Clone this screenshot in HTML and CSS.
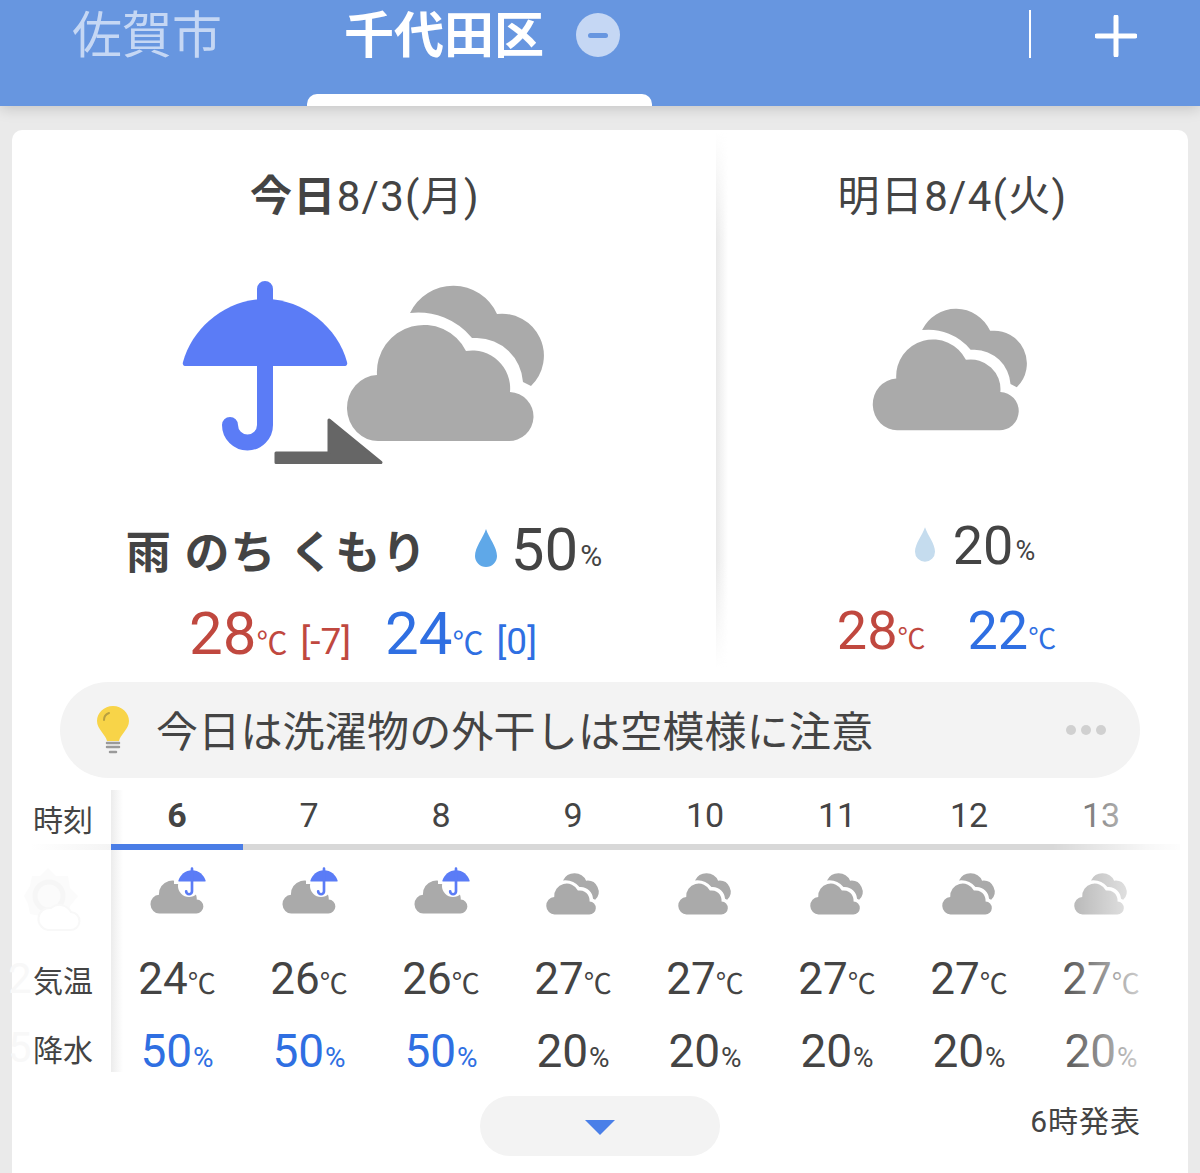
FILE: index.html
```html
<!DOCTYPE html>
<html lang="ja">
<head>
    <meta charset="utf-8">
    <title>天気予報</title>
    <link rel="stylesheet" href="styles.css">
</head>
<body>
    <svg class="defs" width="0" height="0">
        <defs>
            <symbol id="cloud-front" viewBox="346 323 189 120">
                <path fill="#aaaaaa" d="M380 441H508A24 24 0 0 0 510 392A38 38 0 0 0 466 351A47 47 0 0 0 377 375A31 33 0 0 0 379 441Z"/>
            </symbol>
            <symbol id="clouds" viewBox="346 285 207 158">
                <path fill="#aaaaaa" d="M410 313A48 48 0 0 1 497 314A42 42 0 0 1 531 386L523 382A47 47 0 0 0 477 338L472 338A70 70 0 0 0 410 313Z"/>
                <path fill="#aaaaaa" d="M380 441H508A24 24 0 0 0 510 392A38 38 0 0 0 466 351A47 47 0 0 0 377 375A31 33 0 0 0 379 441Z"/>
            </symbol>
            <symbol id="umbrella" viewBox="181 279 168 174">
                <path fill="#5b7cf6" d="M183 362C192 328 226 299 265 299C304 299 338 328 347 362Q348 366 344 366H186Q182 366 183 362Z"/>
                <path fill="none" stroke="#5b7cf6" stroke-width="16" stroke-linecap="round" d="M265 289V425A17.5 17.5 0 0 1 230 425"/>
            </symbol>
            <symbol id="rain-cloud" viewBox="0 0 60 50">
                <use href="#cloud-front" x="0" y="14" width="54" height="34"/>
                <circle cx="39" cy="20" r="11" fill="#fff"/>
                <path fill="#fff" d="M24 14C26 4 36 -2 42 -2C48 -2 56 6 58 14V18H24Z"/>
                <use href="#umbrella" x="28" y="1" width="28" height="29"/>
            </symbol>
            <symbol id="drop" viewBox="0 0 22 38">
                <path d="M11 0C14 9 22 18 22 27A11 11 0 0 1 0 27C0 18 8 9 11 0Z"/>
            </symbol>
        </defs>
    </svg>

    <header class="topbar">
        <div class="tab tab-other">佐賀市</div>
        <div class="tab tab-active">
            <span>千代田区</span>
            <span class="tab-remove"><span class="tab-remove-bar"></span></span>
        </div>
        <div class="topbar-actions">
            <span class="topbar-divider"></span>
            <svg class="topbar-plus" width="42" height="42" viewBox="0 0 42 42"><path d="M21 2V40M2 21H40" stroke="#fff" stroke-width="5" stroke-linecap="round"/></svg>
        </div>
    </header>

    <main class="card">
        <section class="days">
            <div class="day day-today">
                <h2 class="day-title"><b>今日</b>8/3(月)</h2>
                <svg class="today-icon" width="370" height="190" viewBox="180 278 370 190">
                    <use href="#umbrella" x="181" y="279" width="168" height="174"/>
                    <use href="#clouds" x="346" y="285" width="207" height="158"/>
                    <path fill="#666666" stroke="#666666" stroke-width="3" stroke-linejoin="round" d="M276 453H329V420L381 462.500H276Z"/>
                </svg>
                <div class="summary">
                    <span class="summary-text">雨 のち くもり</span>
                    <svg class="drop drop-today" width="22" height="38"><use href="#drop"/></svg>
                    <span class="rain-num">50</span><span class="rain-unit">%</span>
                </div>
                <div class="temps">
                    <span class="temp-hi"><span class="temp-num">28</span><span class="temp-unit">℃</span><span class="temp-diff">[-7]</span></span>
                    <span class="temp-lo"><span class="temp-num">24</span><span class="temp-unit">℃</span><span class="temp-diff">[0]</span></span>
                </div>
            </div>
            <div class="day day-tomorrow">
                <h2 class="day-title">明日8/4(火)</h2>
                <svg class="tomorrow-icon" width="162" height="124"><use href="#clouds"/></svg>
                <div class="summary summary-tomorrow">
                    <svg class="drop drop-tomorrow" width="20" height="35"><use href="#drop"/></svg>
                    <span class="rain-num">20</span><span class="rain-unit">%</span>
                </div>
                <div class="temps temps-tomorrow">
                    <span class="temp-hi"><span class="temp-num">28</span><span class="temp-unit">℃</span></span>
                    <span class="temp-lo"><span class="temp-num">22</span><span class="temp-unit">℃</span></span>
                </div>
            </div>
        </section>

        <section class="advice">
            <svg class="bulb" width="36" height="50" viewBox="0 0 36 50">
                <path fill="#f8d448" d="M18 1C27 1 34 8 34 16C34 24 25 30 24 36H12C11 30 2 24 2 16C2 8 9 1 18 1Z"/>
                <path fill="none" stroke="#b9a040" stroke-width="2" stroke-linecap="round" d="M9 15C9 11 11 9 14 8"/>
                <path stroke="#9a9a9a" stroke-width="2.500" stroke-linecap="round" d="M12 38H24M12 42H24M15 47H21"/>
            </svg>
            <span class="advice-text">今日は洗濯物の外干しは空模様に注意</span>
            <span class="advice-more"><i></i><i></i><i></i></span>
        </section>

        <section class="hourly">
            <div class="hour-rule"></div>
            <div class="cell-label row-hour">時刻</div>
            <div class="cell-hour active">6</div>
            <div class="cell-hour">7</div>
            <div class="cell-hour">8</div>
            <div class="cell-hour">9</div>
            <div class="cell-hour">10</div>
            <div class="cell-hour">11</div>
            <div class="cell-hour">12</div>
            <div class="cell-hour">13</div>

            <div class="cell-label">
                <svg class="ghost-sun" width="58" height="66" viewBox="0 0 58 66">
                    <path fill="#fbfbfb" d="M24 0L32 8L44 8L46 20L54 28L46 38L44 48L32 48L24 56L16 48L6 46L4 36L0 28L6 18L8 8L16 8Z"/>
                    <circle cx="25" cy="28" r="14" fill="none" stroke="#f6f6f6" stroke-width="5"/>
                    <path fill="#fff" stroke="#f8f8f8" stroke-width="2" d="M24 62H46A9 9 0 0 0 47 44A13 13 0 0 0 27 40A10 10 0 0 0 24 62Z"/>
                </svg>
            </div>
            <div class="cell-icon"><svg class="icon-rain" width="60" height="50"><use href="#rain-cloud"/></svg></div>
            <div class="cell-icon"><svg class="icon-rain" width="60" height="50"><use href="#rain-cloud"/></svg></div>
            <div class="cell-icon"><svg class="icon-rain" width="60" height="50"><use href="#rain-cloud"/></svg></div>
            <div class="cell-icon"><svg class="icon-cloud" width="55" height="42"><use href="#clouds"/></svg></div>
            <div class="cell-icon"><svg class="icon-cloud" width="55" height="42"><use href="#clouds"/></svg></div>
            <div class="cell-icon"><svg class="icon-cloud" width="55" height="42"><use href="#clouds"/></svg></div>
            <div class="cell-icon"><svg class="icon-cloud" width="55" height="42"><use href="#clouds"/></svg></div>
            <div class="cell-icon"><svg class="icon-cloud" width="55" height="42"><use href="#clouds"/></svg></div>

            <div class="cell-label"><span class="ghost-num">2</span>気温</div>
            <div class="cell-value">24<small>℃</small></div>
            <div class="cell-value">26<small>℃</small></div>
            <div class="cell-value">26<small>℃</small></div>
            <div class="cell-value">27<small>℃</small></div>
            <div class="cell-value">27<small>℃</small></div>
            <div class="cell-value">27<small>℃</small></div>
            <div class="cell-value">27<small>℃</small></div>
            <div class="cell-value">27<small>℃</small></div>

            <div class="cell-label row-rain"><span class="ghost-num">5</span>降水</div>
            <div class="cell-value cell-rain wet">50<small>%</small></div>
            <div class="cell-value cell-rain wet">50<small>%</small></div>
            <div class="cell-value cell-rain wet">50<small>%</small></div>
            <div class="cell-value cell-rain">20<small>%</small></div>
            <div class="cell-value cell-rain">20<small>%</small></div>
            <div class="cell-value cell-rain">20<small>%</small></div>
            <div class="cell-value cell-rain">20<small>%</small></div>
            <div class="cell-value cell-rain">20<small>%</small></div>

            <div class="hourly-shadow"></div>
            <div class="hourly-fade"></div>
        </section>

        <footer class="card-foot">
            <div class="more-button"><span class="more-arrow"></span></div>
            <span class="published">6時発表</span>
        </footer>
    </main>
</body>
</html>
```

FILE: styles.css
```css
html, body {
    margin: 0;
    padding: 0;
}

body {
    height: 1173px;
    overflow: hidden;
    background-color: #eaeaea;
    color: #444;
    font-family: Roboto, "Noto Sans CJK JP", sans-serif;
}

.defs {
    position: absolute;
}

/* top tabs */
.topbar {
    position: relative;
    display: flex;
    height: 106px;
    background-color: #6796e0;
    box-shadow: 0 2px 14px rgba(0, 0, 0, .18);
}

.tab {
    box-sizing: border-box;
    height: 72px;
    display: flex;
    align-items: center;
    font-size: 50px;
    line-height: 72px;
}

.tab-other {
    width: 307px;
    padding-left: 72px;
    color: #c5d7f4;
}

.tab-active {
    position: relative;
    width: 345px;
    height: 106px;
    padding: 0 0 34px 37px;
    color: #fff;
    font-weight: 700;
}

.tab-active::after {
    content: "";
    position: absolute;
    left: 0;
    right: 0;
    bottom: 0;
    height: 12px;
    background-color: #fff;
    border-radius: 10px 10px 0 0;
}

.tab-remove {
    width: 44px;
    height: 44px;
    margin: 0 0 2px 32px;
    border-radius: 50%;
    background-color: #c5d7f4;
    display: flex;
    align-items: center;
    justify-content: center;
}

.tab-remove-bar {
    width: 20px;
    height: 5px;
    border-radius: 3px;
    background-color: #6796e0;
}

.topbar-actions {
    margin-left: 377px;
    height: 68px;
    display: flex;
    align-items: center;
}

.topbar-divider {
    width: 2px;
    height: 48px;
    background-color: #fff;
    margin-right: 64px;
}

.topbar-plus {
    margin-top: 4px;
}

/* card */
.card {
    margin: 24px 12px 0;
    height: 1043px;
    background-color: #fff;
    border-radius: 10px 10px 0 0;
}

.days {
    display: flex;
    height: 538px;
}

.day {
    display: flex;
    flex-direction: column;
    align-items: center;
    box-sizing: border-box;
}

.day > * {
    flex: none;
}

.day-today {
    position: relative;
    width: 708px;
    padding-right: 4px;
}

.day-today::after {
    content: "";
    position: absolute;
    top: 2px;
    bottom: 0;
    left: 704px;
    width: 12px;
    background: linear-gradient(to right, #e9e9e9, rgba(255, 255, 255, 0));
    -webkit-mask-image: linear-gradient(to bottom, transparent, #000 20%, #000 80%, transparent);
    mask-image: linear-gradient(to bottom, transparent, #000 20%, #000 80%, transparent);
}

.day-tomorrow {
    width: 468px;
}

.day-title {
    margin: 38px 0 0;
    height: 58px;
    font-size: 42px;
    line-height: 58px;
    font-weight: 400;
    letter-spacing: 1.300px;
    white-space: nowrap;
}

.day-today .day-title {
    margin-left: 2px;
}

.day-tomorrow .day-title {
    margin-left: -3px;
}

.today-icon {
    display: block;
    margin: 52px 0 0 2px;
}

.tomorrow-icon {
    display: block;
    margin: 82px 0 0 -2px;
}

.summary {
    display: flex;
    align-items: center;
    height: 60px;
    margin-top: 51px;
}

.summary-text {
    font-size: 45px;
    font-weight: 700;
    letter-spacing: 1.200px;
    margin-right: 47px;
}

.drop {
    display: block;
    margin-top: -2px;
}

.drop-today {
    fill: #5fa8e8;
    margin-right: 14px;
}

.drop-tomorrow {
    fill: #c5dcee;
    margin-right: 18px;
}

.rain-num {
    font-size: 60px;
}

.rain-unit {
    font-size: 30px;
    margin: 12px 0 0 2px;
}

.summary-tomorrow {
    margin-top: 83px;
    padding-left: 42px;
}

.summary-tomorrow .rain-num {
    font-size: 54px;
}

.summary-tomorrow .rain-unit {
    font-size: 27px;
}

.temps {
    display: flex;
    gap: 34px;
    align-items: baseline;
    height: 68px;
    margin: 21px 0 0 -2px;
    line-height: 68px;
}

.temp-hi {
    color: #c0483f;
}

.temp-lo {
    color: #2f6fe2;
}

.temp-num {
    font-size: 60px;
}

.temp-unit {
    font-size: 31px;
}

.temp-diff {
    font-size: 37px;
    margin-left: 13px;
}

.temps-tomorrow {
    gap: 42px;
    margin: 22px 0 0 -15px;
}

.temps-tomorrow .temp-num {
    font-size: 54px;
}

.temps-tomorrow .temp-unit {
    font-size: 28px;
}

/* advice pill */
.advice {
    display: flex;
    align-items: center;
    height: 96px;
    margin: 14px 48px 0;
    padding: 0 34px 0 35px;
    border-radius: 48px;
    background-color: #f3f3f3;
}

.bulb {
    flex: none;
}

.advice-text {
    margin: 0 0 4px 25px;
    font-size: 42px;
    letter-spacing: .2px;
    white-space: nowrap;
}

.advice-more {
    margin-left: auto;
    display: flex;
    gap: 5px;
}

.advice-more i {
    width: 10px;
    height: 10px;
    border-radius: 50%;
    background-color: #d0d0d0;
}

/* hourly table */
.hourly {
    position: relative;
    display: grid;
    grid-template-columns: 99px repeat(8, 132px);
    grid-template-rows: 60px 92px 73px 57px;
    margin-top: 12px;
    height: 282px;
}

.cell-label {
    position: relative;
    display: flex;
    align-items: center;
    padding-left: 21px;
    font-size: 30px;
    white-space: nowrap;
}

.row-hour {
    padding-bottom: 4px;
}

.row-hour::after {
    content: "";
    position: absolute;
    left: 18px;
    right: 0;
    top: 54px;
    height: 6px;
    background: linear-gradient(to right, #fff, #f4f4f4);
}

.row-rain {
    padding-top: 8px;
}

.cell-hour {
    position: relative;
    box-sizing: border-box;
    height: 60px;
    padding-bottom: 10px;
    display: flex;
    align-items: center;
    justify-content: center;
    font-size: 34px;
}

.cell-hour.active {
    z-index: 1;
    font-weight: 700;
    border-bottom: 6px solid #4a7de6;
    padding-bottom: 4px;
}

.hour-rule {
    position: absolute;
    top: 54px;
    left: 99px;
    right: 8px;
    height: 6px;
    background-color: #d8d8d8;
}

.cell-icon {
    display: flex;
    justify-content: center;
    align-items: flex-start;
}

.icon-rain {
    margin: 16px 0 0 5px;
}

.icon-cloud {
    margin: 23px 0 0 1px;
}

.ghost-sun {
    position: absolute;
    left: 12px;
    top: 18px;
}

/* what has scrolled away under the label column */
.ghost-num {
    position: absolute;
    left: -4px;
    font-size: 42px;
    color: #f8f8f8;
}

.cell-value {
    display: flex;
    justify-content: center;
    align-items: baseline;
    font-size: 44px;
    line-height: 75px;
}

.cell-value small {
    font-size: 28px;
}

.cell-rain {
    font-size: 46px;
    line-height: 72px;
}

.cell-rain small {
    margin-left: 1px;
    font-size: 28px;
}

.wet {
    color: #2f6fe2;
}

.hourly-shadow {
    position: absolute;
    left: 99px;
    top: 0;
    bottom: 0;
    width: 12px;
    background: linear-gradient(to right, #ececec, rgba(255, 255, 255, 0));
}

.hourly-fade {
    position: absolute;
    left: 1040px;
    right: 0;
    top: 0;
    bottom: 0;
    background: linear-gradient(to right, rgba(255, 255, 255, 0), rgba(255, 255, 255, .8) 70%, #fff);
}

/* footer */
.card-foot {
    position: relative;
    display: flex;
    justify-content: center;
    margin-top: 24px;
}

.more-button {
    width: 240px;
    height: 60px;
    border-radius: 30px;
    background-color: #f3f3f3;
    display: flex;
    align-items: center;
    justify-content: center;
}

.more-arrow {
    margin-top: 3px;
    width: 0;
    height: 0;
    border-left: 15px solid transparent;
    border-right: 15px solid transparent;
    border-top: 15px solid #4a7fe8;
}

.published {
    position: absolute;
    right: 47px;
    top: 4px;
    font-size: 30px;
    letter-spacing: 1px;
    line-height: 44px;
}
```
